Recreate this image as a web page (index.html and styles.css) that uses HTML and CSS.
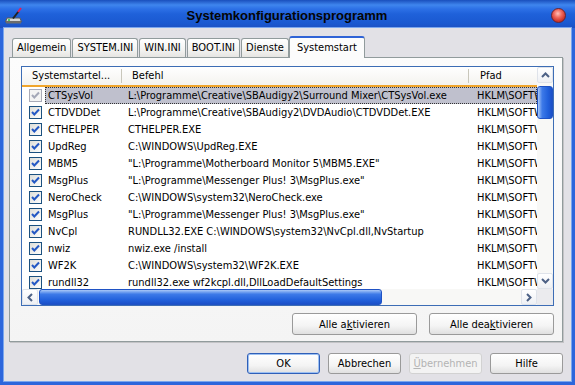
FILE: index.html
```html
<!DOCTYPE html>
<html>

<head>
    <meta charset="UTF-8">
    <link rel="stylesheet" href="styles.css">
</head>

<body>
    <svg class="defs" width="0" height="0">
        <defs>
            <linearGradient id="cbFill" x1="0" y1="0" x2="1" y2="1">
                <stop offset="0" stop-color="#dcdcd7" />
                <stop offset="1" stop-color="#ffffff" />
            </linearGradient>
            <symbol id="chk" viewBox="0 0 13 13">
                <rect x="0.5" y="0.5" width="12" height="12" fill="url(#cbFill)" stroke="#1c5180" />
                <path d="M3 6 L5.3 8.5 L10 3.5" fill="none" stroke="#2458c4" stroke-width="2" />
            </symbol>
            <symbol id="chkOff" viewBox="0 0 13 13">
                <rect x="0.5" y="0.5" width="12" height="12" fill="#f4f4f4" stroke="#a9abb8" />
                <path d="M3 6 L5.3 8.5 L10 3.5" fill="none" stroke="#a4a8b8" stroke-width="2" />
            </symbol>
        </defs>
    </svg>

    <div class="window">
        <div class="titlebar">
            <svg class="app-icon" width="18" height="18" viewBox="0 0 18 18">
                <path d="M2 11h13l1.5 4H0.5z" fill="#d6d6d6" stroke="#5a5a5a" />
                <rect x="1" y="14" width="15" height="2.5" fill="#6c6c6c" />
                <circle cx="4" cy="13" r="1" fill="#1fbf3a" />
                <path d="M8 11.5 L13.5 4.5" stroke="#222" stroke-width="2" />
                <path d="M13 5 L16 1" stroke="#e0205a" stroke-width="2" />
            </svg>
            <div class="title">Systemkonfigurationsprogramm</div>
            <div class="close"></div>
        </div>

        <div class="client">
            <ul class="tabs">
                <li>Allgemein</li>
                <li>SYSTEM.INI</li>
                <li>WIN.INI</li>
                <li>BOOT.INI</li>
                <li>Dienste</li>
                <li class="current">Systemstart</li>
            </ul>

            <div class="panel">
                <div class="listview">
                    <div class="viewport">
                        <div class="header">
                            <div class="h1">Systemstartel...</div>
                            <div class="h2">Befehl</div>
                            <div class="h3">Pfad</div>
                        </div>

                        <div class="row selected">
                            <span class="check"><svg><use href="#chkOff" /></svg></span>
                            <span class="cells"><span class="name">CTSysVol</span><span class="cmd">L:\Programme\Creative\SBAudigy2\Surround Mixer\CTSysVol.exe</span><span class="path">HKLM\SOFTWARE\Microsoft\Windows\CurrentVersion\Run</span></span>
                        </div>
                        <div class="row">
                            <span class="check"><svg><use href="#chk" /></svg></span>
                            <span class="cells"><span class="name">CTDVDDet</span><span class="cmd">L:\Programme\Creative\SBAudigy2\DVDAudio\CTDVDDet.EXE</span><span class="path">HKLM\SOFTWARE\Microsoft\Windows\CurrentVersion\Run</span></span>
                        </div>
                        <div class="row">
                            <span class="check"><svg><use href="#chk" /></svg></span>
                            <span class="cells"><span class="name">CTHELPER</span><span class="cmd">CTHELPER.EXE</span><span class="path">HKLM\SOFTWARE\Microsoft\Windows\CurrentVersion\Run</span></span>
                        </div>
                        <div class="row">
                            <span class="check"><svg><use href="#chk" /></svg></span>
                            <span class="cells"><span class="name">UpdReg</span><span class="cmd">C:\WINDOWS\UpdReg.EXE</span><span class="path">HKLM\SOFTWARE\Microsoft\Windows\CurrentVersion\Run</span></span>
                        </div>
                        <div class="row">
                            <span class="check"><svg><use href="#chk" /></svg></span>
                            <span class="cells"><span class="name">MBM5</span><span class="cmd">"L:\Programme\Motherboard Monitor 5\MBM5.EXE"</span><span class="path">HKLM\SOFTWARE\Microsoft\Windows\CurrentVersion\Run</span></span>
                        </div>
                        <div class="row">
                            <span class="check"><svg><use href="#chk" /></svg></span>
                            <span class="cells"><span class="name">MsgPlus</span><span class="cmd">"L:\Programme\Messenger Plus! 3\MsgPlus.exe"</span><span class="path">HKLM\SOFTWARE\Microsoft\Windows\CurrentVersion\Run</span></span>
                        </div>
                        <div class="row">
                            <span class="check"><svg><use href="#chk" /></svg></span>
                            <span class="cells"><span class="name">NeroCheck</span><span class="cmd">C:\WINDOWS\system32\NeroCheck.exe</span><span class="path">HKLM\SOFTWARE\Microsoft\Windows\CurrentVersion\Run</span></span>
                        </div>
                        <div class="row">
                            <span class="check"><svg><use href="#chk" /></svg></span>
                            <span class="cells"><span class="name">MsgPlus</span><span class="cmd">"L:\Programme\Messenger Plus! 3\MsgPlus.exe"</span><span class="path">HKLM\SOFTWARE\Microsoft\Windows\CurrentVersion\Run</span></span>
                        </div>
                        <div class="row">
                            <span class="check"><svg><use href="#chk" /></svg></span>
                            <span class="cells"><span class="name">NvCpl</span><span class="cmd">RUNDLL32.EXE C:\WINDOWS\system32\NvCpl.dll,NvStartup</span><span class="path">HKLM\SOFTWARE\Microsoft\Windows\CurrentVersion\Run</span></span>
                        </div>
                        <div class="row">
                            <span class="check"><svg><use href="#chk" /></svg></span>
                            <span class="cells"><span class="name">nwiz</span><span class="cmd">nwiz.exe /install</span><span class="path">HKLM\SOFTWARE\Microsoft\Windows\CurrentVersion\Run</span></span>
                        </div>
                        <div class="row">
                            <span class="check"><svg><use href="#chk" /></svg></span>
                            <span class="cells"><span class="name">WF2K</span><span class="cmd">C:\WINDOWS\system32\WF2K.EXE</span><span class="path">HKLM\SOFTWARE\Microsoft\Windows\CurrentVersion\Run</span></span>
                        </div>
                        <div class="row">
                            <span class="check"><svg><use href="#chk" /></svg></span>
                            <span class="cells"><span class="name">rundll32</span><span class="cmd">rundll32.exe wf2kcpl.dll,DllLoadDefaultSettings</span><span class="path">HKLM\SOFTWARE\Microsoft\Windows\CurrentVersion\Run</span></span>
                        </div>
                    </div>

                    <div class="vscroll">
                        <div class="sb-btn">
                            <svg width="9" height="6" viewBox="0 0 9 6"><path d="M1 5 L4.5 1.5 L8 5" fill="none" stroke="#4d6185" stroke-width="2" /></svg>
                        </div>
                        <div class="vthumb"></div>
                        <div class="track"></div>
                        <div class="sb-btn">
                            <svg width="9" height="6" viewBox="0 0 9 6"><path d="M1 1 L4.5 4.5 L8 1" fill="none" stroke="#4d6185" stroke-width="2" /></svg>
                        </div>
                    </div>
                    <div class="hscroll">
                        <div class="sb-btn">
                            <svg width="6" height="9" viewBox="0 0 6 9"><path d="M5 1 L1.5 4.5 L5 8" fill="none" stroke="#4d6185" stroke-width="2" /></svg>
                        </div>
                        <div class="hthumb"></div>
                        <div class="track"></div>
                        <div class="sb-btn">
                            <svg width="6" height="9" viewBox="0 0 6 9"><path d="M1 1 L4.5 4.5 L1 8" fill="none" stroke="#4d6185" stroke-width="2" /></svg>
                        </div>
                    </div>
                    <div class="corner"></div>
                </div>

                <div class="panel-buttons">
                    <button class="btn wide">Alle a<u>k</u>tivieren</button>
                    <button class="btn wide">Alle dea<u>k</u>tivieren</button>
                </div>
            </div>

            <div class="dialog-buttons">
                <button class="btn default">OK</button>
                <button class="btn">Abbrechen</button>
                <button class="btn" disabled><u>Ü</u>bernehmen</button>
                <button class="btn">Hilfe</button>
            </div>
        </div>
    </div>
</body>

</html>
```

FILE: styles.css
```css
body {
    margin: 0;
    font-family: "DejaVu Sans Condensed", "Liberation Sans", sans-serif;
    font-size: 11px;
    color: #000;
}

.defs {
    position: absolute;
    width: 0;
    height: 0;
}

.window {
    width: 575px;
    height: 385px;
    display: flex;
    flex-direction: column;
    background: #2d66dc;
}

/* title bar */
.titlebar {
    height: 28px;
    flex: none;
    display: flex;
    align-items: center;
    padding: 0 9px 0 5px;
    background: linear-gradient(#1a4fbd 0, #3f86ee 5px, #2c70e6 9px, #1f61da 50%, #1a58d0 85%, #1d50c2 100%);
}

.app-icon {
    margin-top: 3px;
}

.title {
    flex: 1;
    text-align: center;
    margin-top: 3px;
    font-family: "Liberation Sans", sans-serif;
    font-weight: bold;
    font-size: 13px;
    color: #050505;
}

.close {
    width: 13px;
    height: 13px;
    margin-top: 3px;
    border-radius: 50%;
    border: 1px solid #6c2430;
    background: radial-gradient(circle at 45% 35%, #ffc0b8 0, #f06a5e 35%, #d23a30 65%, #9c1c18 100%);
}

/* client area */
.client {
    flex: 1;
    margin: 0 4px 4px;
    padding: 8px 8px 0 5px;
    display: flex;
    flex-direction: column;
    background: #e2e1e6;
    box-shadow: 0 0 0 1px #7aa6ee;
}

.tabs {
    list-style: none;
    margin: 0;
    padding: 0 0 0 3px;
    height: 21px;
    display: flex;
    align-items: flex-end;
}

.tabs li {
    box-sizing: border-box;
    height: 19px;
    padding: 0 4px;
    margin-right: 1px;
    line-height: 18px;
    border: 1px solid #919b9c;
    border-bottom: 0;
    border-radius: 3px 3px 0 0;
    background: linear-gradient(#ffffff, #f3f3f1 60%, #e6e5e2);
    white-space: nowrap;
}

.tabs li.current {
    position: relative;
    z-index: 1;
    height: 22px;
    margin: 0 -1px -1px -1px;
    padding: 0 7px;
    line-height: 19px;
    border-top: 2px solid #2f63d6;
    background: #fcfcfc;
}

.panel {
    box-sizing: border-box;
    height: 285px;
    padding: 8px 8px 6px 11px;
    display: flex;
    flex-direction: column;
    border: 1px solid #919b9c;
    box-shadow: 1px 1px 0 #c3c3c6;
    background: linear-gradient(#fcfcfc, #f4f4f4);
}

/* list view */
.listview {
    box-sizing: border-box;
    height: 240px;
    display: grid;
    grid-template-columns: 1fr 16px;
    grid-template-rows: 1fr 16px;
    border: 1px solid #3d6db5;
    background: #fff;
}

.viewport {
    overflow: hidden;
}

.header {
    height: 18px;
    display: flex;
    align-items: center;
    border-bottom: 2px solid #f0a52c;
    background: linear-gradient(#ffffff, #f4f3ef);
}

.header div {
    flex: none;
    box-sizing: border-box;
    height: 14px;
    line-height: 14px;
    white-space: nowrap;
    border-right: 1px solid #c9c7bb;
}

.header .h1 {
    width: 100px;
    padding-left: 10px;
}

.header .h2 {
    width: 347px;
    padding-left: 10px;
}

.header .h3 {
    width: 68px;
    padding-left: 11px;
    border-right: 0;
}

.row {
    height: 17px;
    line-height: 17px;
    display: flex;
    white-space: nowrap;
}

.row .check {
    flex: none;
    box-sizing: border-box;
    width: 23px;
    padding-left: 7px;
    display: flex;
    align-items: center;
}

.row .check svg {
    width: 13px;
    height: 13px;
}

.row .cells {
    display: flex;
    flex: none;
}

.row.selected .cells {
    background: #bfc0cd;
    outline: 1px dotted #333;
    outline-offset: -1px;
}

.cells span {
    flex: none;
    box-sizing: border-box;
}

.cells .name {
    width: 77px;
    padding-left: 3px;
}

.cells .cmd {
    width: 347px;
    padding-left: 6px;
}

/* the column runs on past the visible area, so its text is cut at the scrollbar */
.cells .path {
    width: 68px;
    padding-left: 8px;
    overflow: hidden;
}

/* scroll bars */
.vscroll {
    display: flex;
    flex-direction: column;
    background: #f8f8f6;
}

.hscroll {
    display: flex;
    background: #f8f8f6;
}

.track {
    flex: 1;
}

.sb-btn {
    box-sizing: border-box;
    width: 16px;
    height: 16px;
    flex: none;
    display: flex;
    align-items: center;
    justify-content: center;
    border: 1px solid #dfe3ea;
    border-radius: 2px;
    background: linear-gradient(#ffffff, #eef0f4);
}

.vthumb {
    height: 31px;
    margin-top: 3px;
    border: 1px solid #1f52c4;
    border-radius: 3px;
    background: linear-gradient(90deg, #a9c8f7, #3d7ae8 30%, #2261dc 70%, #1b50c8);
}

.hthumb {
    width: 341px;
    margin-left: 1px;
    border: 1px solid #1f52c4;
    border-radius: 3px;
    background: linear-gradient(#a9c8f7, #3d7ae8 30%, #2261dc 70%, #1b50c8);
}

.corner {
    background: #ebebee;
}

/* buttons */
.btn {
    box-sizing: border-box;
    width: 73px;
    height: 21px;
    padding: 0;
    font-family: inherit;
    font-size: 11px;
    color: #000;
    border: 1px solid #9a9a9a;
    border-radius: 3px;
    background: linear-gradient(#ffffff, #f4f4f4 60%, #e0e0e0);
}

.btn.wide {
    width: 125px;
    height: 22px;
}

.btn.default {
    border-color: #2f5fb8;
    box-shadow: inset 0 0 0 1px #9cc0f2;
}

.btn:disabled {
    color: #b4b4b4;
    border-color: #d2d2d2;
    background: #f3f3f3;
}

.panel-buttons {
    margin-top: 7px;
    display: flex;
    justify-content: flex-end;
    gap: 12px;
}

.dialog-buttons {
    margin-top: 11px;
    display: flex;
    justify-content: flex-end;
    gap: 8px;
}
```
